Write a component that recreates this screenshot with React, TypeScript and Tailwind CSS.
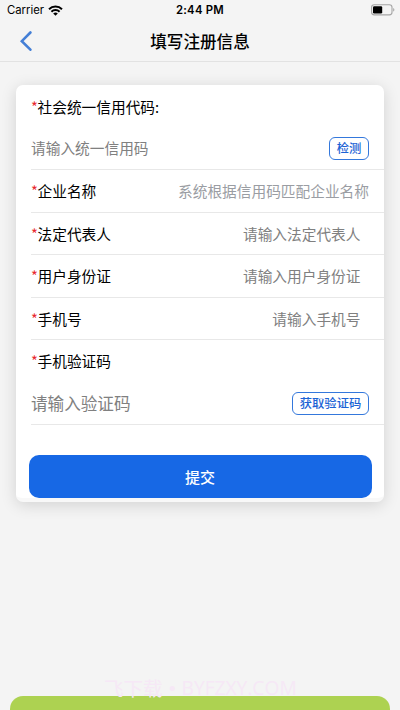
import { useState } from "react";

type Campo = {
  name: string;
  label: string;
  placeholder: string;
  clase: string;
};

const campos: Campo[] = [
  {
    name: "empresa",
    label: "企业名称",
    placeholder: "系统根据信用码匹配企业名称",
    clase: "h-[42px] pb-0.5 pr-[15px] placeholder:text-[#9a9da3]",
  },
  {
    name: "representante",
    label: "法定代表人",
    placeholder: "请输入法定代表人",
    clase: "h-[41px] pr-[23.5px] placeholder:text-[#808080]",
  },
  {
    name: "identidad",
    label: "用户身份证",
    placeholder: "请输入用户身份证",
    clase: "h-[42px] pb-0.5 pr-[23.5px] placeholder:text-[#808080]",
  },
  {
    name: "telefono",
    label: "手机号",
    placeholder: "请输入手机号",
    clase: "h-[41px] pr-[23.5px] placeholder:text-[#808080]",
  },
];

const initialForm: Record<string, string> = {
  credito: "",
  empresa: "",
  representante: "",
  identidad: "",
  telefono: "",
  codigo: "",
};

function Etiqueta({ children }: { children: string }) {
  return (
    <span className="flex shrink-0 items-center text-[14.7px] leading-[22px] text-black">
      <span className="w-[6.5px] text-[#e8282c]">*</span>
      {children}
    </span>
  );
}

function BarraEstado() {
  return (
    <div className="grid h-5 grid-cols-3 items-center pl-[7px] pr-[5px] font-[Inter,sans-serif] text-[11.3px] leading-5 text-black">
      <div className="flex items-center gap-1">
        <span>Carrier</span>
        <svg width="15" height="11" viewBox="0 0 15 11" fill="none" stroke="#000" strokeWidth="2">
          <path d="M1 4.2a9.3 9.3 0 0 1 13 0" />
          <path d="M3.4 6.7a5.9 5.9 0 0 1 8.2 0" />
          <path d="M7.5 10.8 5.2 8.5a3.3 3.3 0 0 1 4.6 0z" fill="#000" stroke="none" />
        </svg>
      </div>
      <span className="-ml-0.5 text-center font-semibold tracking-[0.25px]">2:44 PM</span>
      <svg className="justify-self-end" width="24" height="12" viewBox="0 0 24 12">
        <rect x="0.6" y="0.7" width="20.4" height="10.2" rx="2.6" fill="none" stroke="#a5a5a5" strokeWidth="1.1" />
        <rect x="2" y="2.2" width="9.2" height="7.2" rx="1.2" fill="#000" />
        <path d="M22.2 4v3.6c1.6-.5 1.6-3.1 0-3.6z" fill="#a5a5a5" />
      </svg>
    </div>
  );
}

export default function App() {
  const [form, setForm] = useState(initialForm);

  function handleChange(event: React.ChangeEvent<HTMLInputElement>) {
    const { name, value } = event.target;

    setForm((prev) => ({
      ...prev,
      [name]: value,
    }));
  }

  return (
    <main className="flex h-[710px] w-[400px] flex-col overflow-hidden bg-[#f4f4f4] font-['Noto_Sans_CJK_SC',sans-serif]">
      <header className="h-[62px] shrink-0 border-b border-[#e2e2e2]">
        <BarraEstado />
        <div className="grid h-[41px] grid-cols-[50px_1fr_50px] items-center">
          <button type="button" aria-label="返回" className="pl-5">
            <svg width="13" height="20" viewBox="0 0 13 20" fill="none" stroke="#447fd6" strokeWidth="2.6" strokeLinecap="round">
              <path d="M10.4 1.5 1.8 10.2l8.6 8.5" />
            </svg>
          </button>
          <h1 className="text-center text-[16.6px] font-medium leading-6 text-black">填写注册信息</h1>
        </div>
      </header>

      <form
        onSubmit={(event) => event.preventDefault()}
        className="mx-4 mt-[23px] h-[417px] shrink-0 overflow-hidden rounded-[7px] border-b-4 border-[#f8f8f8] bg-white shadow-[0_3px_16px_rgba(0,0,0,0.14)]"
      >
        <div className="ml-[15px] h-[85px] border-b border-[#e8e8e8]">
          <div className="flex h-[43px] items-center">
            <Etiqueta>社会统一信用代码:</Etiqueta>
          </div>
          <div className="flex h-[41px] items-center pr-[15px]">
            <input
              name="credito"
              value={form.credito}
              onChange={handleChange}
              placeholder="请输入统一信用码"
              className="min-w-0 flex-1 text-[14.7px] outline-none placeholder:text-[#808080]"
            />
            <button
              type="button"
              className="h-[23px] w-10 rounded-md border border-[#3478dc] text-[12.3px] font-medium leading-[21px] text-[#1c63d5]"
            >
              检测
            </button>
          </div>
        </div>

        {campos.map((campo) => (
          <div
            key={campo.name}
            className="ml-[15px] flex items-center border-b border-[#e8e8e8]"
          >
            <Etiqueta>{campo.label}</Etiqueta>
            <input
              name={campo.name}
              value={form[campo.name]}
              onChange={handleChange}
              placeholder={campo.placeholder}
              className={`min-w-0 flex-1 text-right text-[14.7px] outline-none ${campo.clase}`}
            />
          </div>
        ))}

        <div className="ml-[15px] h-[85px] border-b border-[#e8e8e8]">
          <div className="flex h-[42px] items-center">
            <Etiqueta>手机验证码</Etiqueta>
          </div>
          <div className="flex h-[42px] items-center pr-[15px]">
            <input
              name="codigo"
              value={form.codigo}
              onChange={handleChange}
              placeholder="请输入验证码"
              className="min-w-0 flex-1 pb-px text-[16.6px] leading-6 outline-none placeholder:text-[#808080]"
            />
            <button
              type="button"
              className="h-[23px] w-[77px] rounded-md border border-[#3478dc] text-[12.3px] font-medium leading-[21px] text-[#1c63d5]"
            >
              获取验证码
            </button>
          </div>
        </div>

        <button
          type="submit"
          className="ml-[12.5px] mt-[30px] block h-[43px] w-[343px] rounded-[10px] bg-[#1768e5] pt-px text-[15px] font-medium text-white"
        >
          提交
        </button>
      </form>

      <footer className="mt-auto">
        <p className="flex h-[17px] items-center pl-[104px] text-[19.5px] leading-[17px] text-[#f6e8f6]">
          飞下载
          <span className="w-[19px] text-center font-bold">·</span>
          <span className="font-['Open_Sans',sans-serif] text-[19.2px]">BYFZXY.COM</span>
        </p>
        <div className="mx-2.5 h-[14px] rounded-t-[13px] bg-[#add251]" />
      </footer>
    </main>
  );
}
